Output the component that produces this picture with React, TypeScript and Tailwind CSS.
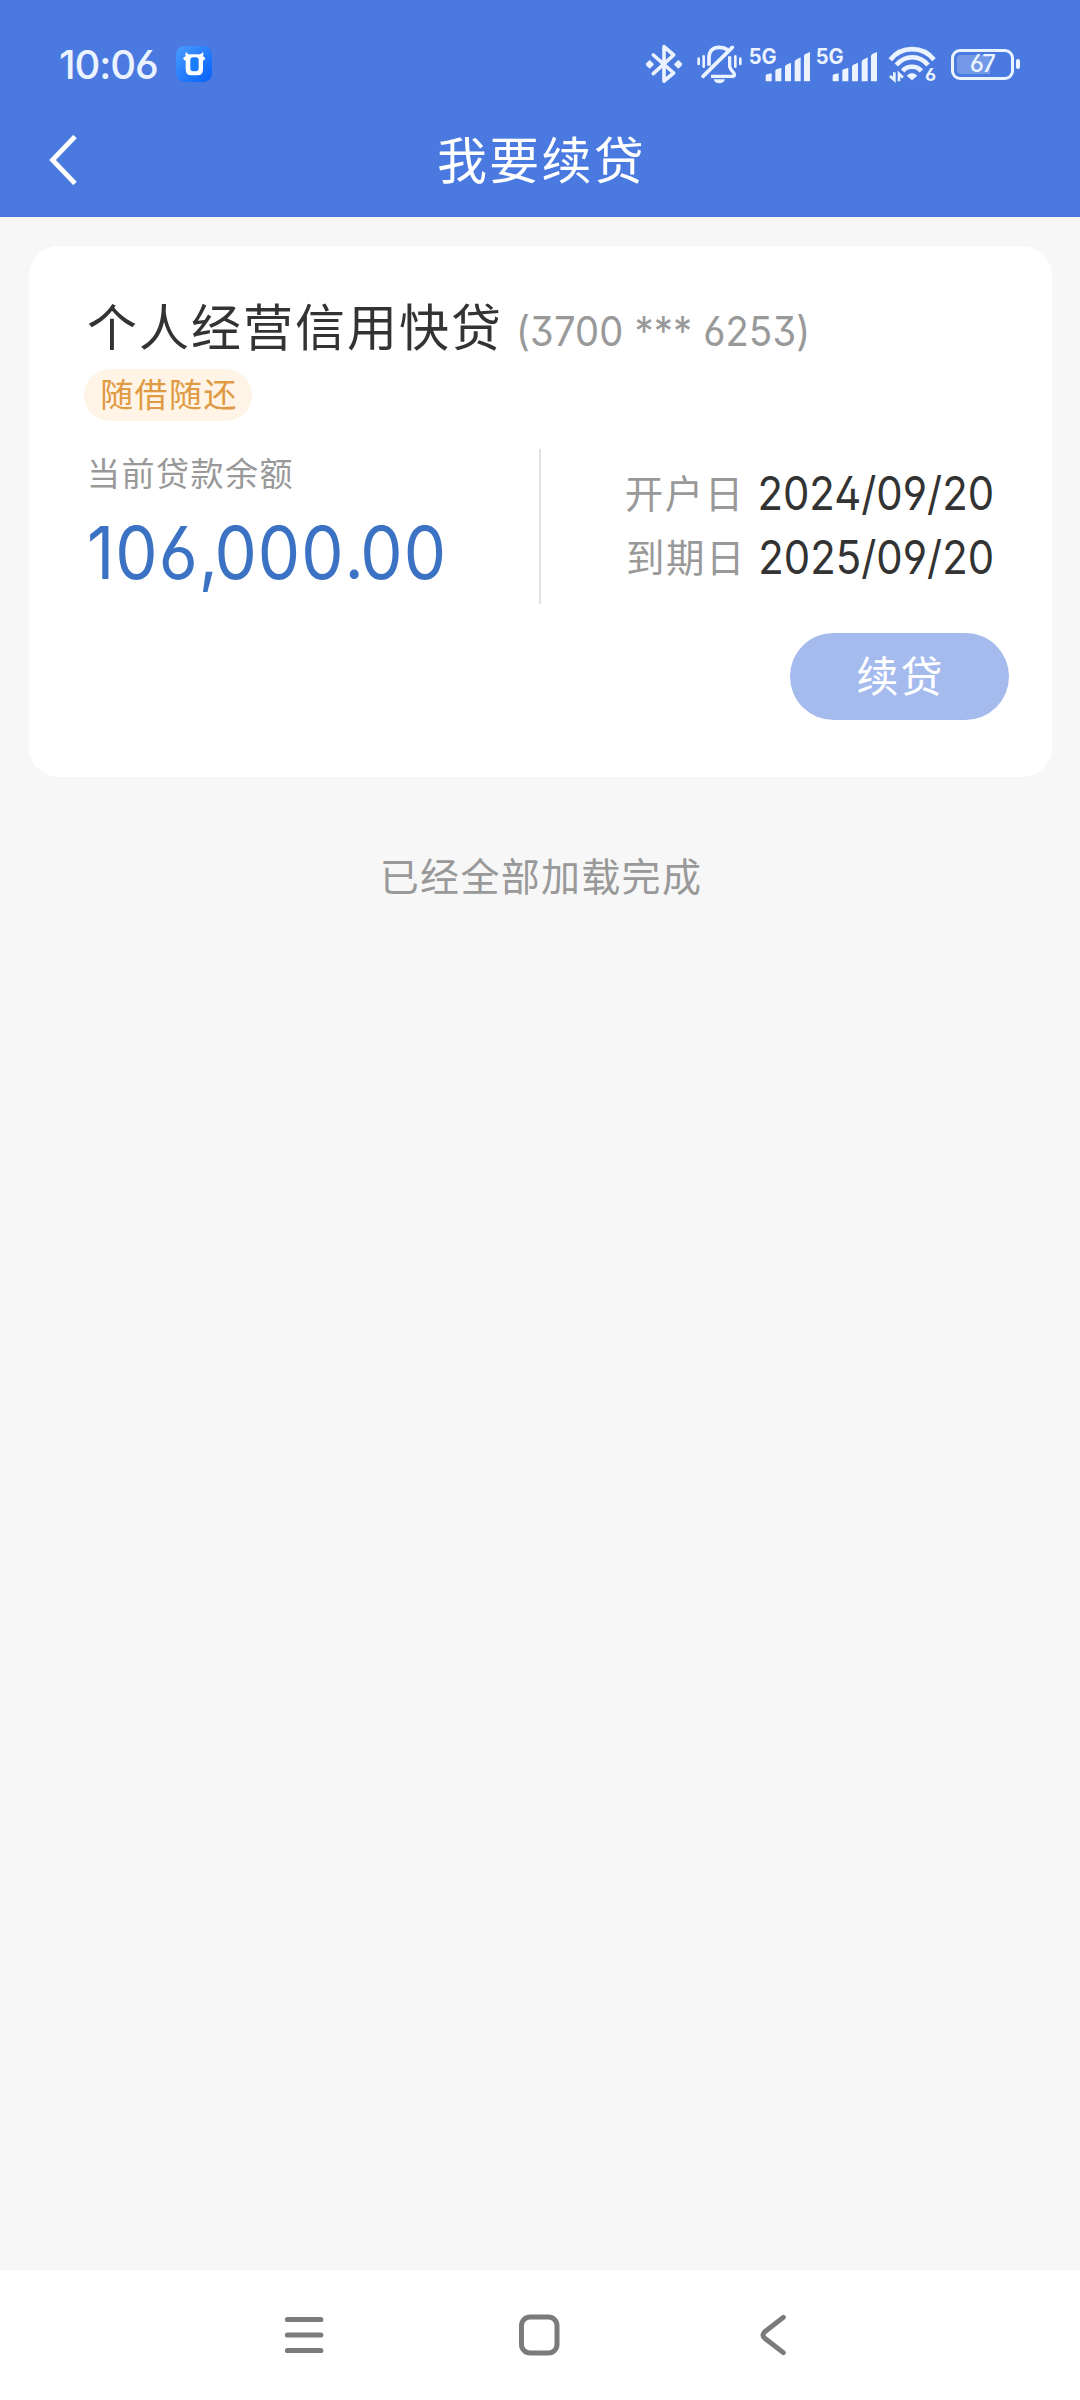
const cjk = "font-['Noto_Sans_CJK_SC',sans-serif] whitespace-nowrap";
const num = "font-['Inter',sans-serif] [font-feature-settings:'ss01'] whitespace-nowrap";

function BluetoothIcon() {
  return (
    <svg width="36" height="40" viewBox="48 41 108 120" className="shrink-0">
      <path d="M70 74 L131 128 L102 152 V49 L131 74 L70 130" fill="none" stroke="#eaf3ff" strokeWidth="11" strokeLinecap="round" strokeLinejoin="round" />
      <path d="M59 92 L69 102 L59 112 L49 102 Z M145 92 L155 102 L145 112 L135 102 Z" fill="#eaf3ff" stroke="#eaf3ff" strokeWidth="5" strokeLinejoin="round" />
    </svg>
  );
}

function MutedBellIcon() {
  return (
    <svg width="45" height="40" viewBox="200 43 135 120" className="shrink-0" fill="none" stroke="#eaf3ff">
      <path d="M306 53 L218 140" strokeWidth="11" strokeLinecap="round" />
      <path d="M236 108 V84 C236 62 249 53 266 53 C277 53 286 56 292 61" strokeWidth="11" />
      <path d="M298 80 V109 C298 117 305 123 311 131 C314 138 311 140 308 140 H242" strokeWidth="10" />
      <path d="M250 149 H284 C282 157 276 161 267 161 C258 161 252 157 250 149 Z" fill="#eaf3ff" stroke="none" />
      <path d="M205 87 V103 M220 80 V111 M315 80 V111 M330 87 V103" strokeWidth="8" strokeLinecap="round" />
    </svg>
  );
}

function Signal({ className }: { className: string }) {
  return (
    <svg width="61" height="36" viewBox="358 41 183 108" className={`overflow-visible ${className}`}>
      <text x="357" y="96" fontFamily="Inter, sans-serif" fontWeight="700" fontSize="63" textLength="84" lengthAdjust="spacingAndGlyphs" fill="#eaf3ff">
        5G
      </text>
      <path
        d="M408 147 V131 Q408 127 412 126 L426 123 V147 Z M437 147 V116 Q437 112 441 111 L455 106 V147 Z M466 147 V104 Q466 99 470 97 L484 91 V147 Z M495 147 V89 Q495 84 499 82 L513 75 V147 Z M523 147 V72 Q523 67 527 65 L541 59 V147 Z"
        fill="#eaf3ff"
      />
    </svg>
  );
}

function WifiIcon() {
  return (
    <svg width="47" height="36" viewBox="149 51 141 108" className="shrink-0 overflow-visible">
      <g fill="none" stroke="#eaf3ff" strokeWidth="14">
        <path d="M153 92 C187 50 250 50 284 92" />
        <path d="M171 108 C197 77 241 77 266 108" />
        <path d="M190 126 C204 109 232 109 246 126" />
      </g>
      <path d="M218 154 L202 140 Q218 124 234 140 Z" fill="#eaf3ff" />
      <path d="M165 130 V153 L152 141 M179 157 V134 L191 146" fill="none" stroke="#eaf3ff" strokeWidth="8" />
      <text x="257" y="157" fontFamily="Inter, sans-serif" fontWeight="700" fontSize="54" fill="#eaf3ff" className="[font-feature-settings:'ss01']">
        6
      </text>
    </svg>
  );
}

function Battery() {
  return (
    <div className="flex shrink-0 items-center gap-[2px]">
      <div className="flex h-[31px] w-[63px] rounded-[9px] border-[3.5px] border-[#eaf3ff] p-[3px]">
        <div className={`flex h-full w-full items-center justify-center rounded-[4px] bg-[linear-gradient(to_right,#7398e6_64%,transparent_64%)] text-[24px] leading-none font-medium tracking-[-0.8px] text-[#eaf3ff] ${num}`}>
          67
        </div>
      </div>
      <div className="h-[10px] w-[4px] rounded-[2px] bg-[#eaf3ff]" />
    </div>
  );
}

function AppBadge() {
  return (
    <svg width="36" height="36" viewBox="0 0 108 108" className="ml-[19px]">
      <defs>
        <linearGradient id="badge" x1="0" y1="0" x2="1" y2="1">
          <stop offset="0" stopColor="#4a9cff" />
          <stop offset="1" stopColor="#0560fa" />
        </linearGradient>
      </defs>
      <rect width="108" height="108" rx="25" fill="url(#badge)" />
      <path d="M30 18 Q34 27 46 25 H65 Q76 27 81 18 Q84 24 81 31 L88 36 Q87 42 81 44 V68 Q81 88 64 88 H46 Q29 88 29 68 V44 Q23 42 21 36 L29 31 Q26 24 30 18 Z" fill="#fff" />
      <rect x="43" y="34" width="25" height="42" rx="9" fill="#187cfb" />
    </svg>
  );
}

function StatusBar() {
  return (
    <div className="flex h-[128px] items-center pr-[60px] pl-[59px]">
      <span className={`w-[98px] pt-[1px] text-[40px] leading-none font-medium tracking-[-1.1px] text-[#eaf3ff] ${num}`}>10:06</span>
      <AppBadge />
      <div className="ml-auto flex items-center">
        <BluetoothIcon />
        <div className="w-[15px]" />
        <MutedBellIcon />
        <Signal className="ml-[7px] shrink-0" />
        <Signal className="mr-[12px] ml-[6px] shrink-0" />
        <WifiIcon />
        <div className="w-[15px]" />
        <Battery />
      </div>
    </div>
  );
}

function DateRow({ label, value }: { label: string; value: string }) {
  return (
    <div className="flex h-[64px] items-center justify-end">
      <span className={`mr-[-11px] pb-[3px] text-[38.5px] leading-none tracking-[1.5px] text-[#999] ${cjk}`}>{label}</span>
      <span className={`origin-right scale-x-[0.91] text-[46px] leading-none text-[#333] ${num}`}>{value}</span>
    </div>
  );
}

function LoanCard() {
  return (
    <section className="mt-[29px] mr-[28px] ml-[29px] h-[531px] rounded-[30px] bg-white pt-[46px]">
      <div className="flex h-[64px] items-center pl-[58px]">
        <h2 className={`text-[50px] leading-none tracking-[2px] text-[#333] ${cjk}`}>个人经营信用快贷</h2>
        <span className={`ml-[13px] origin-left scale-x-[0.93] pt-[15px] text-[41px] leading-none tracking-[0.2px] text-[#999] ${num}`}>(3700 *** 6253)</span>
      </div>
      <div className={`mt-[13px] ml-[55px] flex h-[52px] w-[168px] items-center justify-center rounded-full bg-[#fff4e6] pb-[3px] pl-[2px] text-[33px] leading-none tracking-[1.4px] text-[#e09a43] ${cjk}`}>
        随借随还
      </div>
      <div className="mt-[28px] flex h-[155px]">
        <div className="w-[510px] pl-[58px]">
          <div className={`flex h-[47px] items-center text-[33px] leading-none tracking-[1.5px] text-[#999] ${cjk}`}>当前贷款余额</div>
          <div className={`mt-[21px] h-[72px] w-fit origin-left scale-x-[0.92] text-[73px] leading-[72px] tracking-[1.1px] text-[#3b72c4] ${num}`}>
            106<span className="tracking-[-4px]">,</span>000<span className="tracking-[-4px]">.</span>00
          </div>
        </div>
        <div className="w-[2px] bg-[#e2e2e2]" />
        <div className="flex-1 pt-[12px] pr-[58px]">
          <DateRow label="开户日" value="2024/09/20" />
          <DateRow label="到期日" value="2025/09/20" />
        </div>
      </div>
      <button className={`mt-[29px] ml-[761px] flex h-[87px] w-[219px] items-center justify-center rounded-full bg-[#a5bbee] pb-[5px] pl-[2px] text-[42px] leading-none tracking-[2px] text-white ${cjk}`}>
        续贷
      </button>
    </section>
  );
}

function NavBar() {
  return (
    <nav className="mt-auto flex h-[130px] items-center bg-white pl-[284px]">
      <svg width="40" height="42" viewBox="0 0 40 42" stroke="#7b7b7b" strokeWidth="5.2" strokeLinecap="round">
        <path d="M3.5 5.5 H36.8 M3.5 21 H36.8 M3.5 36.5 H36.8" />
      </svg>
      <svg width="42" height="42" viewBox="0 0 42 42" fill="none" stroke="#7b7b7b" strokeWidth="5" className="ml-[194px]">
        <rect x="3.5" y="3" width="35.5" height="36" rx="8.5" />
      </svg>
      <svg width="28" height="42" viewBox="0 0 28 42" fill="none" stroke="#7b7b7b" strokeWidth="5" strokeLinecap="round" className="ml-[199px]">
        <path d="M24.3 3.4 L5.8 17.8 Q2 21 5.8 24.2 L24.3 38.6" />
      </svg>
    </nav>
  );
}

export default function App() {
  return (
    <div className="flex h-[2400px] w-[1080px] flex-col overflow-hidden bg-[#f7f7f7]">
      <header className="h-[217px] bg-[#4a79df]">
        <StatusBar />
        <div className="grid h-[62px] grid-cols-[1fr_auto_1fr] items-center">
          <svg width="28" height="50" viewBox="0 0 28 50" className="mt-[1px] ml-[49px]" fill="none" stroke="#fff" strokeWidth="4.8">
            <path d="M26 1.5 L3.5 25 L26 48.5" />
          </svg>
          <h1 className={`pb-[4px] pl-[3px] text-[50px] leading-none tracking-[2.2px] text-white ${cjk}`}>我要续贷</h1>
        </div>
      </header>
      <LoanCard />
      <p className={`mt-[67px] flex h-[60px] items-center justify-center pl-[2px] text-[39px] leading-none tracking-[1.3px] text-[#999] ${cjk}`}>已经全部加载完成</p>
      <NavBar />
    </div>
  );
}
